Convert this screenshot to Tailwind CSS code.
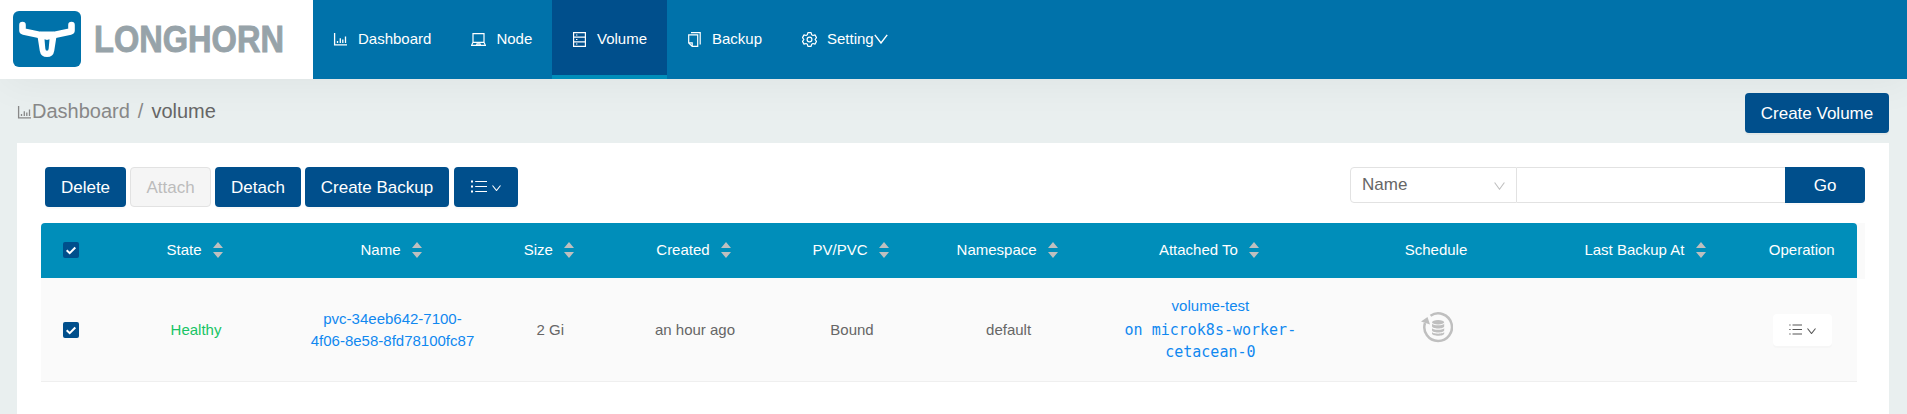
<!DOCTYPE html>
<html lang="en">
<head>
<meta charset="utf-8">
<title>Longhorn</title>
<script src="https://cdn.jsdelivr.net/npm/@tailwindcss/browser@4"></script>
</head>
<body class="h-[414px] overflow-hidden bg-[#e9efef] font-['Liberation_Sans',Arial,sans-serif] text-[15px] text-[#666]">
<svg class="hidden">
  <symbol id="chart" viewBox="0 0 15 15"><path d="M1.600 1v11.800H14M4.500 9v2M7.300 6.300V11M9.800 7.400V11M12.500 4.600V11" fill="none" stroke="currentColor" stroke-width="1.300"/></symbol>
  <symbol id="down" viewBox="0 0 14 10"><path d="M.8.8 7 9 13.200.8" fill="none" stroke="currentColor" stroke-width="1.400"/></symbol>
  <symbol id="sorter" viewBox="0 0 10 16"><path d="M5 0 10 6H0ZM0 10H10L5 16Z" fill="#bfbfbf"/></symbol>
  <symbol id="list" viewBox="0 0 16 13"><path d="M4.200 1.500H16M4.200 6.500H16M4.200 11.500H16" fill="none" stroke="currentColor" stroke-width="1"/><path d="M0 .5h2v2H0zM0 5.500h2v2H0zM0 10.500h2v2H0z" fill="currentColor"/></symbol>
  <symbol id="check" viewBox="0 0 16 16"><rect width="16" height="16" rx="2" fill="#004f8c"/><path d="m3.700 8.200 3 3 5.600-5.700" fill="none" stroke="#fff" stroke-width="2"/></symbol>
</svg>

<header class="relative flex h-[79px] bg-[#0072aa] shadow-[4px_4px_40px_0_rgba(0,0,0,0.05)]">
  <div class="h-[79px] w-[313px] bg-white">
    <svg class="block" width="313" height="79" viewBox="0 0 313 79">
      <rect x="13" y="11" width="68" height="56" rx="6" fill="#0072aa"/>
      <path d="M22.500 25v5.500q0 .7 1 .9L40 34.900h14l16.500-3.500q1-.2 1-.9V25" fill="none" stroke="#fff" stroke-width="6.600" stroke-linecap="round" stroke-linejoin="round"/>
      <path d="M37.300 35 47 32l9.700 3-2.500 16q-1 6-7.200 6t-7.200-6Z" fill="#fff"/>
      <path d="m44.500 39.300 2.500.8 2.500-.8-.8 9.200q-.2 2.300-1.700 2.300t-1.700-2.300Z" fill="#0072aa"/>
      <text x="94" y="51.700" font-family="Liberation Sans" font-weight="700" font-size="36" fill="#97a3a9" stroke="#97a3a9" stroke-width=".9" textLength="190" lengthAdjust="spacingAndGlyphs">LONGHORN</text>
    </svg>
  </div>
  <nav class="flex text-[15px] text-white">
    <a class="flex h-[79px] w-[138.400px] items-center gap-[10px] pl-5 pb-px"><svg width="15" height="15"><use href="#chart"/></svg>Dashboard</a>
    <a class="flex h-[79px] w-[100.600px] items-center gap-[10px] pl-5 pb-px"><svg width="15" height="15" viewBox="0 0 15 15" fill="none" stroke="currentColor" stroke-width="1.200"><path d="M2 10.300V1.600H13V10.300M2 10.300 .6 13.300H14.400L13 10.300ZM5.500 13.200 6 11.800H9L9.500 13.200"/></svg>Node</a>
    <a class="flex h-[79px] w-[115px] items-center gap-[10px] border-b-4 border-[#008eba] bg-[#004f8c] pl-5 pt-[3px]"><svg width="15" height="15" viewBox="0 0 15 15" fill="none" stroke="currentColor" stroke-width="1.200"><path d="M1.600.6H13.400V14.400H1.600ZM1.600 5.200H13.400M1.600 9.800H13.400M4 3H5.400M4 7.500H5.400M4 12H5.400"/></svg>Volume</a>
    <a class="flex h-[79px] w-[115px] items-center gap-[10px] pl-5 pb-px"><svg width="15" height="15" viewBox="0 0 15 15" fill="none" stroke="currentColor" stroke-width="1.200"><path d="M4 .7H13.200V12.500M1.700 2.800H10.700V14.400H5.200L1.700 10.900ZM1.700 10.900H5.200V14.400"/></svg>Backup</a>
    <a class="flex h-[79px] items-center pl-5 pb-px"><svg class="mr-[10px]" width="15" height="15" viewBox="0 0 15 15" fill="none" stroke="currentColor" stroke-width="1.200" stroke-linejoin="round"><path d="M5.900.7H9.100L9.600 2.700 11 3.500 13 2.900 14.500 5.600 13.100 7.500 14.500 9.400 13 12.100 11 11.500 9.600 12.300 9.100 14.300H5.900L5.400 12.300 4 11.500 2 12.100.5 9.400 1.900 7.500.5 5.600 2 2.900 4 3.500 5.400 2.700Z"/><circle cx="7.500" cy="7.500" r="2.400"/></svg>Setting<svg class="ml-[.5px] mb-px" width="14" height="10"><use href="#down"/></svg></a>
  </nav>
</header>

<div class="flex h-16 items-start justify-between pl-[17px] pr-[18px]">
  <div class="flex pt-5 text-[20px] leading-6 text-[#888]">
    <svg class="mt-[6px]" width="15" height="15"><use href="#chart"/></svg><span>Dashboard</span><span class="pl-[8px] pr-[8px]">/</span><span class="text-[#666]">volume</span>
  </div>
  <button class="relative mt-[14px] h-10 w-36 rounded-[4px] bg-[#004f8c] pt-[2px] text-[17px] text-white shadow-[0_2px_0_rgba(0,0,0,0.03)]">Create Volume</button>
</div>

<main class="relative ml-[17px] h-[271px] w-[1872px] bg-white pt-6">
  <div class="flex h-14 justify-between pl-7 pr-6">
    <div class="flex h-10 gap-1 text-[17px] text-white">
      <button class="h-10 w-[81px] rounded-[4px] bg-[#004f8c] pt-[2px] shadow-[0_2px_0_rgba(0,0,0,0.02)]">Delete</button>
      <button class="h-10 w-[81px] rounded-[4px] border border-[#e2e2e2] bg-[#f5f5f5] pt-[2px] text-[#bcbcbc]">Attach</button>
      <button class="h-10 w-[86px] rounded-[4px] bg-[#004f8c] pt-[2px] shadow-[0_2px_0_rgba(0,0,0,0.02)]">Detach</button>
      <button class="h-10 w-36 rounded-[4px] bg-[#004f8c] pt-[2px] shadow-[0_2px_0_rgba(0,0,0,0.02)]">Create Backup</button>
      <button class="ml-px flex h-10 w-16 items-center rounded-[4px] bg-[#004f8c] pb-px pl-[17px] shadow-[0_2px_0_rgba(0,0,0,0.02)]"><svg width="16" height="13"><use href="#list"/></svg><svg class="ml-[5px] mt-[3px]" width="9" height="6" viewBox="0 0 9 6"><path d="m.5.500 4 5 4-5" fill="none" stroke="currentColor" stroke-width="1.100"/></svg></button>
    </div>
    <div class="flex h-9 text-[17px]">
      <div class="flex h-9 w-[167px] items-center justify-between rounded-l-[4px] border border-[#e2e2e2] pb-px pl-[11px] pr-[11px]"><span>Name</span><svg class="mt-[2px] text-[#bfbfbf]" width="11" height="8" viewBox="0 0 11 8"><path d="m.6.500 4.900 6.700L10.400.5" fill="none" stroke="currentColor" stroke-width="1.100"/></svg></div>
      <div class="h-9 w-[268px] border-y border-[#e2e2e2]"></div>
      <button class="h-9 w-20 rounded-r-[4px] bg-[#004f8c] pt-[2px] text-white shadow-[0_2px_0_rgba(0,0,0,0.02)]">Go</button>
    </div>
  </div>

  <div class="ml-6 h-14 w-[1824px] bg-[linear-gradient(90deg,#fff_1810px,#fafafa_1810px)]">
    <div class="grid h-[55px] w-[1816px] grid-cols-[60px_190px_203px_112.6px_176.8px_137.2px_176px_227.6px_223.6px_198.8px_110.4px] items-center justify-items-center rounded-t-[4px] bg-[#008eba] text-white">
      <svg class="mb-px" width="16" height="16"><use href="#check"/></svg>
      <div class="flex items-center gap-[11.500px] pr-[2.500px]">State<svg class="mb-px" width="10" height="16"><use href="#sorter"/></svg></div>
      <div class="flex items-center gap-[11.500px] pr-[2.500px]">Name<svg class="mb-px" width="10" height="16"><use href="#sorter"/></svg></div>
      <div class="flex items-center gap-[11.500px] pr-[2.500px]">Size<svg class="mb-px" width="10" height="16"><use href="#sorter"/></svg></div>
      <div class="flex items-center gap-[11.500px] pr-[2.500px]">Created<svg class="mb-px" width="10" height="16"><use href="#sorter"/></svg></div>
      <div class="flex items-center gap-[11.500px] pr-[2.500px]">PV/PVC<svg class="mb-px" width="10" height="16"><use href="#sorter"/></svg></div>
      <div class="flex items-center gap-[11.500px] pr-[2.500px]">Namespace<svg class="mb-px" width="10" height="16"><use href="#sorter"/></svg></div>
      <div class="flex items-center gap-[11.500px] pr-[2.500px]">Attached To<svg class="mb-px" width="10" height="16"><use href="#sorter"/></svg></div>
      <div>Schedule</div>
      <div class="flex items-center gap-[11.500px] pr-[4px]">Last Backup At<svg class="mb-px" width="10" height="16"><use href="#sorter"/></svg></div>
      <div>Operation</div>
    </div>
  </div>

  <div class="-mt-px ml-6 grid h-[104px] w-[1816px] grid-cols-[60px_190px_203px_112.6px_176.8px_137.2px_176px_227.6px_223.6px_198.8px_110.4px] items-center justify-items-center border-b border-[#efefef] bg-[#fafafa] text-center leading-[22px]">
    <svg width="16" height="16"><use href="#check"/></svg>
    <div class="text-[#18c465]">Healthy</div>
    <div class="text-[#1088f0]">pvc-34eeb642-7100-<br>4f06-8e58-8fd78100fc87</div>
    <div>2 Gi</div>
    <div>an hour ago</div>
    <div>Bound</div>
    <div>default</div>
    <div class="pb-[2px] text-[#1088f0]">volume-test<div class="pt-[2px] font-['DejaVu_Sans_Mono',monospace]">on microk8s-worker-<br>cetacean-0</div></div>
    <svg class="mb-[4px] ml-[3px]" width="32" height="32" viewBox="0 0 32 32">
      <path d="M9.500 3.700A13.800 13.800 0 1 1 4 11" fill="none" stroke="#bfbfbf" stroke-width="2.500"/>
      <path d="M0 9.500 6.500 5 9 12.500Z" fill="#bfbfbf"/>
      <path d="M11 11.300v3c0 3 12.200 3 12.200 0v-3c0 2.700-12.200 2.700-12.200 0ZM11 15.700v2.600c0 3 12.200 3 12.200 0v-2.600c0 2.700-12.200 2.700-12.200 0ZM11 19.800v1.700c0 3 12.200 3 12.200 0v-1.700c0 2.500-12.200 2.500-12.200 0Z" fill="#bfbfbf"/>
      <ellipse cx="17.100" cy="10.300" rx="6.100" ry="2.200" fill="#bfbfbf"/>
    </svg>
    <div></div>
    <button class="ml-[2px] flex h-8 w-[59px] items-center rounded-[4px] bg-white pl-4 text-[#555] shadow-[0_2px_0_rgba(0,0,0,0.015)]"><svg width="13" height="11" viewBox="0 0 13 11"><path d="M3.500 1H13M3.500 5.500H13M3.500 10H13M.3 1H1.600M.3 5.500H1.600M.3 10H1.600" fill="none" stroke="currentColor" stroke-width="1.200"/></svg><svg class="ml-[5px] mt-[3px]" width="9" height="6" viewBox="0 0 9 6"><path d="m.5.500 4 5 4-5" fill="none" stroke="currentColor" stroke-width="1.100"/></svg></button>
  </div>
</main>
</body>
</html>
